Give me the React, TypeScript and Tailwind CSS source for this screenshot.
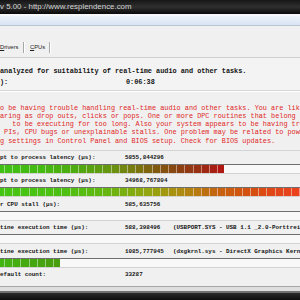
type RGB = [number, number, number]
type Stop = [number, RGB]

const bar1: Stop[] = [
  [0, [64, 192, 18]],
  [40, [68, 186, 18]],
  [80, [80, 168, 16]],
  [110, [104, 150, 16]],
  [135, [122, 120, 16]],
  [155, [128, 90, 16]],
  [180, [140, 64, 18]],
  [205, [158, 40, 18]],
  [224, [180, 20, 20]],
]

const bar2: Stop[] = [
  [0, [70, 196, 20]],
  [60, [76, 192, 18]],
  [100, [96, 184, 16]],
  [150, [150, 164, 16]],
  [180, [172, 140, 16]],
  [215, [196, 100, 16]],
  [250, [212, 80, 16]],
  [300, [236, 64, 32]],
]

const bar5: Stop[] = [
  [0, [66, 180, 16]],
  [60, [72, 156, 16]],
]

function colorAt(stops: Stop[], x: number): RGB {
  if (x <= stops[0][0]) return stops[0][1]
  for (let i = 1; i < stops.length; i++) {
    const [x1, c1] = stops[i]
    const [x0, c0] = stops[i - 1]
    if (x <= x1) {
      const t = (x - x0) / (x1 - x0)
      return [0, 1, 2].map((k) => Math.round(c0[k] + (c1[k] - c0[k]) * t)) as RGB
    }
  }
  return stops[stops.length - 1][1]
}

const rgb = (c: RGB) => `rgb(${c[0]},${c[1]},${c[2]})`
const light = (c: RGB) => rgb(c.map((v) => Math.round(v + (255 - v) * 0.45)) as RGB)

function Meter({ fill, stops }: { fill: number; stops?: Stop[] }) {
  const rects = []
  if (stops) {
    for (let b = -4.2; b < fill; b += 8.2) {
      const x0 = Math.round(b)
      const x1 = Math.min(Math.round(b + 8.2), fill)
      const c = colorAt(stops, (x0 + x1) / 2)
      rects.push(<rect key={`s${b}`} x={x0} y={0} width={1} height={8} fill={light(c)} />)
      rects.push(<rect key={`f${b}`} x={x0 + 1} y={0} width={Math.max(0, x1 - x0 - 1)} height={8} fill={rgb(c)} />)
    }
  }
  return (
    <div className="mt-[2px] h-[10px] border-t border-t-[#6e6e6e] border-b border-b-[#d2d2d2] bg-[#f8f8f8]">
      <svg width="300" height="8" className="block">
        {rects}
      </svg>
    </div>
  )
}

const mono = "font-['Liberation_Mono',monospace]"

function Stat({ label, value, extra, fill, stops, bar = true }: {
  label: string
  value: string
  extra?: string
  fill?: number
  stops?: Stop[]
  bar?: boolean
}) {
  return (
    <div className={bar ? "h-[23.4px]" : "h-[8px]"}>
      <div className={`${mono} text-[5.9px] font-bold text-[#141414] h-[8px] leading-[8px] flex whitespace-pre`}>
        <span className="w-[125px] shrink-0">{label}</span>
        <span className="w-[48px] shrink-0">{value}</span>
        {extra && <span>{extra}</span>}
      </div>
      {bar && <Meter fill={fill ?? 0} stops={stops} />}
    </div>
  )
}

const redLines = [
  "o be having trouble handling real-time audio and other tasks. You are lik",
  "aring as drop outs, clicks or pops. One or more DPC routines that belong",
  "   to be executing for too long. Also your system appears to be having trou",
  " PIs, CPU bugs or unexplainable stalls. One problem may be related to powe",
  "g settings in Control Panel and BIOS setup. Check for BIOS updates.",
]

export default function App() {
  return (
    <div className="w-[300px] h-[300px] overflow-hidden bg-[#f0f0f0] flex flex-col">
      <div className="h-[14px] shrink-0 bg-gradient-to-b from-[#161616] via-[#303030] to-[#0a0a0a] flex items-center">
        <span className="font-['Liberation_Sans',sans-serif] text-[7.9px] text-[#d4d4d4] whitespace-pre leading-none">
          v 5.00 - http://www.resplendence.com
        </span>
      </div>
      <div className="h-[2px] shrink-0 bg-[#f6f8fb]" />
      <div className="h-[9px] shrink-0 bg-gradient-to-b from-[#eef3fa] to-[#d9e4f3]" />
      <div className="h-px shrink-0 bg-[#b9c5d6]" />

      <div className="h-[31px] shrink-0 pt-[16px] flex font-['Liberation_Sans',sans-serif] text-[5.8px] text-[#202020]">
        <div className="w-[23px] h-[11px] flex items-center">
          <span><span className="underline">D</span>rivers</span>
        </div>
        <div className="w-px h-[11px] bg-[#a8a8a8]" />
        <div className="w-px h-[11px] bg-white" />
        <div className="w-[24px] h-[11px] pl-[5px] flex items-center">
          <span><span className="underline">C</span>PUs</span>
        </div>
        <div className="w-px h-[11px] bg-[#a8a8a8]" />
        <div className="w-px h-[11px] bg-white" />
      </div>

      <div className="h-px shrink-0 bg-[#d0d0d0]" />
      <div className={`h-[32px] shrink-0 pt-[8px] bg-[#f3f3f3] ${mono} text-[6.85px] font-bold text-[#121212] whitespace-pre`}>
        <div className="h-[10.5px] leading-[10.5px]">analyzed for suitability of real-time audio and other tasks.</div>
        <div className="h-[10.5px] leading-[10.5px] flex">
          <span className="w-[126px] shrink-0">):</span>
          <span>0:06:38</span>
        </div>
      </div>
      <div className="h-px shrink-0 bg-[#d6d6d6]" />
      <div className="h-px shrink-0 bg-white" />

      <div className={`h-[58px] shrink-0 pt-[11.6px] ${mono} text-[6.85px] text-[#e02626] whitespace-pre overflow-hidden`}>
        {redLines.map((l) => (
          <div key={l} className="h-[8.25px] leading-[8.25px]">{l}</div>
        ))}
      </div>
      <div className="h-px shrink-0 bg-[#d4d4d4]" />

      <div className="shrink-0 pt-[3px]">
        <Stat label="pt to process latency (µs):" value="5855,844296" fill={224} stops={bar1} />
        <Stat label="pt to process latency (µs):" value="34968,767804" fill={300} stops={bar2} />
        <Stat label="r CPU stall (µs):" value="585,635756" fill={0} />
        <Stat label="tine execution time (µs):" value="588,398496" extra="(USBPORT.SYS - USB 1.1 _2.0-Porttreib" fill={0} />
        <Stat label="tine execution time (µs):" value="1085,777945" extra="(dxgkrnl.sys - DirectX Graphics Kern" fill={60} stops={bar5} />
        <Stat label="efault count:" value="33287" bar={false} />
      </div>
      <div className="h-[6.6px] shrink-0" />
      <div className="h-px shrink-0 bg-[#a6a6a6]" />
      <div className="h-[4px] shrink-0 bg-[#dedede]" />
      <div className="h-[2px] shrink-0 bg-[#707070]" />
      <div className="flex-1 bg-gradient-to-b from-[#2a2a2a] to-[#0e0e0e]" />
    </div>
  )
}
